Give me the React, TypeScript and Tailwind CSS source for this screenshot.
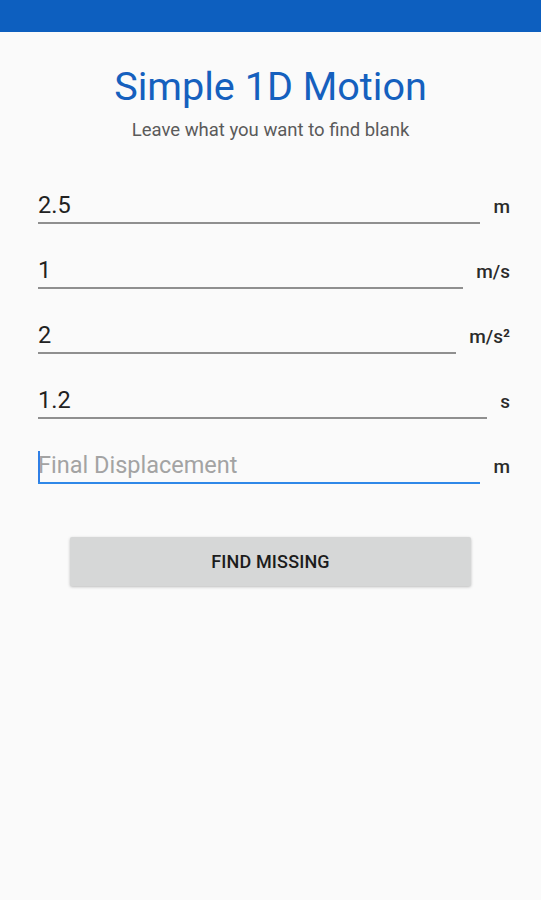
import React from "react";

const rows = [
  { value: "2.5", unit: "m" },
  { value: "1", unit: "m/s" },
  { value: "2", unit: "m/s²" },
  { value: "1.2", unit: "s" },
];

export default function App() {
  return (
    <div
      className="w-[541px] h-[900px] bg-[#fafafa] flex flex-col"
      style={{ fontFamily: "Roboto, 'Noto Sans', sans-serif" }}
    >
      <div className="h-[32px] bg-[#0d5fbf] shrink-0" />
      <div className="flex flex-col items-center mt-[31px]">
        <h1 className="text-[39.6px] leading-[48px] text-[#1560be]">Simple 1D Motion</h1>
        <p className="text-[18.5px] leading-[22px] text-[#5a5a5a] mt-[8px]">Leave what you want to find blank</p>
      </div>
      <div className="flex flex-col gap-[32px] pl-[38px] pr-[31px] mt-[50px]">
        {rows.map((r) => (
          <div key={r.unit} className="flex items-baseline">
            <div className="flex-1 pb-[3px] border-b-2 border-[#8f8f8f] text-[23.5px] leading-[28px] text-[#222222]">
              {r.value}
            </div>
            <div className="ml-[13px] text-[19px] font-medium text-[#2a2a2a]">{r.unit}</div>
          </div>
        ))}
        <div className="flex items-baseline">
          <div className="flex-1 pb-[3px] border-b-2 border-[#2f88e8] text-[23.5px] leading-[28px] text-[#a3a3a3] relative">
            <span className="absolute left-0 top-[0px] w-[2px] h-[31px] bg-[#2f7fe6]" />
            Final Displacement
          </div>
          <div className="ml-[13px] text-[19px] font-medium text-[#2a2a2a]">m</div>
        </div>
      </div>
      <div className="mt-[53px] flex justify-center">
        <button className="w-[401px] h-[49px] bg-[#d6d7d7] rounded-[2px] shadow-[0_1px_3px_rgba(0,0,0,0.25)] text-[18px] font-medium text-[#1c1c1c] tracking-[0.15px]">
          FIND MISSING
        </button>
      </div>
    </div>
  );
}
